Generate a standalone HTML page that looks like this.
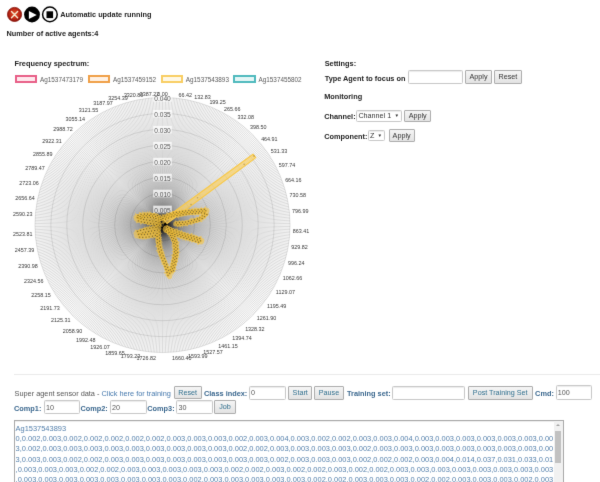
<!DOCTYPE html><html><head><meta charset="utf-8"><style>
*{margin:0;padding:0;box-sizing:border-box}
html,body{width:600px;height:482px;overflow:hidden;background:#fff}
body{position:relative;font-family:"Liberation Sans",sans-serif;color:#222}
.t{position:absolute;white-space:nowrap;line-height:1;font-size:7.35px}
.b{font-weight:bold}
.btn{position:absolute;border:1px solid #adadad;border-radius:1px;background:linear-gradient(#f5f5f5,#e3e3e3);font-size:7.2px;line-height:1;color:#333;display:flex;align-items:center;justify-content:center;white-space:nowrap}
.inp{position:absolute;border:1px solid #c8c8c8;border-radius:1.5px;box-shadow:inset 0 1px 1px rgba(0,0,0,.08);background:#fff;font-size:7.2px;line-height:1;color:#555;display:flex;align-items:center;padding-left:1px;white-space:nowrap}
.blue{color:#3a678e}
.lbox{position:absolute;height:8px;width:22.6px;border:2px solid}
</style></head><body><svg width="0" height="0" style="position:absolute"><filter id="sb" x="0" y="0" width="100%" height="100%" color-interpolation-filters="sRGB"><feConvolveMatrix order="3" kernelMatrix="1 10 1 10 100 10 1 10 1" divisor="144" edgeMode="duplicate"/></filter></svg><div style="position:absolute;left:0;top:0;width:600px;height:482px;background:#fff;filter:url(#sb)"><svg width="60" height="28" style="position:absolute;left:0;top:0">
<defs><radialGradient id="rg" cx="50%" cy="45%" r="55%"><stop offset="0" stop-color="#e05426"/><stop offset="0.6" stop-color="#c02a16"/><stop offset="1" stop-color="#8c1208"/></radialGradient></defs>
<circle cx="14.55" cy="14.45" r="7.05" fill="url(#rg)" stroke="#861008" stroke-width="0.8"/>
<path d="M11.5 11.6L17.6 17.7M17.6 11.6L11.5 17.7" stroke="#f6e8cf" stroke-width="1.45" stroke-linecap="round"/>
<circle cx="32" cy="14.5" r="7.9" fill="#000"/>
<path d="M28.9 11.1L36.7 15.1L28.9 19.1Z" fill="#fff"/>
<circle cx="49.9" cy="14.4" r="7.3" fill="none" stroke="#000" stroke-width="1.5"/>
<rect x="46.5" y="11.3" width="6.6" height="6.8" fill="#000"/>
</svg><div class="t b" style="left:60.2px;top:11.20px;">Automatic update running</div><div class="t b" style="left:6.4px;top:30.40px;">Number of active agents:4</div><div class="t b" style="left:14.5px;top:59.60px;">Frequency spectrum:</div><div class="lbox" style="left:14.8px;top:74.7px;border-color:rgb(232,96,136);background:rgba(255,99,132,0.15)"></div><div class="t" style="left:40.0px;top:76.90px;font-size:6.36px;color:#5a5a5a">Ag1537473179</div><div class="lbox" style="left:87.8px;top:74.7px;border-color:rgb(240,160,72);background:rgba(255,159,64,0.15)"></div><div class="t" style="left:113.0px;top:76.90px;font-size:6.36px;color:#5a5a5a">Ag1537459152</div><div class="lbox" style="left:160.6px;top:74.7px;border-color:rgb(248,206,100);background:rgba(255,205,86,0.15)"></div><div class="t" style="left:185.79999999999998px;top:76.90px;font-size:6.36px;color:#5a5a5a">Ag1537543893</div><div class="lbox" style="left:233.3px;top:74.7px;border-color:rgb(80,186,190);background:rgba(75,192,192,0.15)"></div><div class="t" style="left:258.5px;top:76.90px;font-size:6.36px;color:#5a5a5a">Ag1537455802</div><svg width="600" height="482" style="position:absolute;left:0;top:0" font-family="Liberation Sans, sans-serif"><g stroke="rgba(0,0,0,0.23)" stroke-width="0.6" fill="none"><path d="M162.5 225L162.5 97.4"/><path d="M162.5 225L164.07 97.41"/><path d="M162.5 225L165.63 97.44"/><path d="M162.5 225L167.2 97.49"/><path d="M162.5 225L168.76 97.55"/><path d="M162.5 225L170.32 97.64"/><path d="M162.5 225L171.89 97.75"/><path d="M162.5 225L173.45 97.87"/><path d="M162.5 225L175.01 98.01"/><path d="M162.5 225L176.56 98.18"/><path d="M162.5 225L178.12 98.36"/><path d="M162.5 225L179.67 98.56"/><path d="M162.5 225L181.22 98.78"/><path d="M162.5 225L182.77 99.02"/><path d="M162.5 225L184.31 99.28"/><path d="M162.5 225L185.86 99.56"/><path d="M162.5 225L187.39 99.85"/><path d="M162.5 225L188.93 100.17"/><path d="M162.5 225L190.46 100.5"/><path d="M162.5 225L191.98 100.85"/><path d="M162.5 225L193.5 101.22"/><path d="M162.5 225L195.02 101.61"/><path d="M162.5 225L196.53 102.02"/><path d="M162.5 225L198.04 102.45"/><path d="M162.5 225L199.54 102.89"/><path d="M162.5 225L201.04 103.36"/><path d="M162.5 225L202.53 103.84"/><path d="M162.5 225L204.01 104.34"/><path d="M162.5 225L205.49 104.86"/><path d="M162.5 225L206.96 105.4"/><path d="M162.5 225L208.42 105.95"/><path d="M162.5 225L209.88 106.52"/><path d="M162.5 225L211.33 107.11"/><path d="M162.5 225L212.77 107.72"/><path d="M162.5 225L214.21 108.35"/><path d="M162.5 225L215.64 108.99"/><path d="M162.5 225L217.06 109.65"/><path d="M162.5 225L218.47 110.33"/><path d="M162.5 225L219.87 111.02"/><path d="M162.5 225L221.26 111.74"/><path d="M162.5 225L222.65 112.47"/><path d="M162.5 225L224.03 113.21"/><path d="M162.5 225L225.39 113.98"/><path d="M162.5 225L226.75 114.76"/><path d="M162.5 225L228.1 115.55"/><path d="M162.5 225L229.44 116.37"/><path d="M162.5 225L230.77 117.2"/><path d="M162.5 225L232.08 118.04"/><path d="M162.5 225L233.39 118.9"/><path d="M162.5 225L234.69 119.78"/><path d="M162.5 225L235.97 120.68"/><path d="M162.5 225L237.25 121.59"/><path d="M162.5 225L238.51 122.51"/><path d="M162.5 225L239.76 123.45"/><path d="M162.5 225L241 124.41"/><path d="M162.5 225L242.23 125.38"/><path d="M162.5 225L243.45 126.36"/><path d="M162.5 225L244.65 127.36"/><path d="M162.5 225L245.84 128.38"/><path d="M162.5 225L247.02 129.41"/><path d="M162.5 225L248.19 130.45"/><path d="M162.5 225L249.34 131.51"/><path d="M162.5 225L250.49 132.59"/><path d="M162.5 225L251.61 133.67"/><path d="M162.5 225L252.73 134.77"/><path d="M162.5 225L253.83 135.89"/><path d="M162.5 225L254.91 137.01"/><path d="M162.5 225L255.99 138.16"/><path d="M162.5 225L257.05 139.31"/><path d="M162.5 225L258.09 140.48"/><path d="M162.5 225L259.12 141.66"/><path d="M162.5 225L260.14 142.85"/><path d="M162.5 225L261.14 144.05"/><path d="M162.5 225L262.12 145.27"/><path d="M162.5 225L263.09 146.5"/><path d="M162.5 225L264.05 147.74"/><path d="M162.5 225L264.99 148.99"/><path d="M162.5 225L265.91 150.25"/><path d="M162.5 225L266.82 151.53"/><path d="M162.5 225L267.72 152.81"/><path d="M162.5 225L268.6 154.11"/><path d="M162.5 225L269.46 155.42"/><path d="M162.5 225L270.3 156.73"/><path d="M162.5 225L271.13 158.06"/><path d="M162.5 225L271.95 159.4"/><path d="M162.5 225L272.74 160.75"/><path d="M162.5 225L273.52 162.11"/><path d="M162.5 225L274.29 163.47"/><path d="M162.5 225L275.03 164.85"/><path d="M162.5 225L275.76 166.24"/><path d="M162.5 225L276.48 167.63"/><path d="M162.5 225L277.17 169.03"/><path d="M162.5 225L277.85 170.44"/><path d="M162.5 225L278.51 171.86"/><path d="M162.5 225L279.15 173.29"/><path d="M162.5 225L279.78 174.73"/><path d="M162.5 225L280.39 176.17"/><path d="M162.5 225L280.98 177.62"/><path d="M162.5 225L281.55 179.08"/><path d="M162.5 225L282.1 180.54"/><path d="M162.5 225L282.64 182.01"/><path d="M162.5 225L283.16 183.49"/><path d="M162.5 225L283.66 184.97"/><path d="M162.5 225L284.14 186.46"/><path d="M162.5 225L284.61 187.96"/><path d="M162.5 225L285.05 189.46"/><path d="M162.5 225L285.48 190.97"/><path d="M162.5 225L285.89 192.48"/><path d="M162.5 225L286.28 194"/><path d="M162.5 225L286.65 195.52"/><path d="M162.5 225L287 197.04"/><path d="M162.5 225L287.33 198.57"/><path d="M162.5 225L287.65 200.11"/><path d="M162.5 225L287.94 201.64"/><path d="M162.5 225L288.22 203.19"/><path d="M162.5 225L288.48 204.73"/><path d="M162.5 225L288.72 206.28"/><path d="M162.5 225L288.94 207.83"/><path d="M162.5 225L289.14 209.38"/><path d="M162.5 225L289.32 210.94"/><path d="M162.5 225L289.49 212.49"/><path d="M162.5 225L289.63 214.05"/><path d="M162.5 225L289.75 215.61"/><path d="M162.5 225L289.86 217.18"/><path d="M162.5 225L289.95 218.74"/><path d="M162.5 225L290.01 220.3"/><path d="M162.5 225L290.06 221.87"/><path d="M162.5 225L290.09 223.43"/><path d="M162.5 225L290.1 225"/><path d="M162.5 225L290.09 226.57"/><path d="M162.5 225L290.06 228.13"/><path d="M162.5 225L290.01 229.7"/><path d="M162.5 225L289.95 231.26"/><path d="M162.5 225L289.86 232.82"/><path d="M162.5 225L289.75 234.39"/><path d="M162.5 225L289.63 235.95"/><path d="M162.5 225L289.49 237.51"/><path d="M162.5 225L289.32 239.06"/><path d="M162.5 225L289.14 240.62"/><path d="M162.5 225L288.94 242.17"/><path d="M162.5 225L288.72 243.72"/><path d="M162.5 225L288.48 245.27"/><path d="M162.5 225L288.22 246.81"/><path d="M162.5 225L287.94 248.36"/><path d="M162.5 225L287.65 249.89"/><path d="M162.5 225L287.33 251.43"/><path d="M162.5 225L287 252.96"/><path d="M162.5 225L286.65 254.48"/><path d="M162.5 225L286.28 256"/><path d="M162.5 225L285.89 257.52"/><path d="M162.5 225L285.48 259.03"/><path d="M162.5 225L285.05 260.54"/><path d="M162.5 225L284.61 262.04"/><path d="M162.5 225L284.14 263.54"/><path d="M162.5 225L283.66 265.03"/><path d="M162.5 225L283.16 266.51"/><path d="M162.5 225L282.64 267.99"/><path d="M162.5 225L282.1 269.46"/><path d="M162.5 225L281.55 270.92"/><path d="M162.5 225L280.98 272.38"/><path d="M162.5 225L280.39 273.83"/><path d="M162.5 225L279.78 275.27"/><path d="M162.5 225L279.15 276.71"/><path d="M162.5 225L278.51 278.14"/><path d="M162.5 225L277.85 279.56"/><path d="M162.5 225L277.17 280.97"/><path d="M162.5 225L276.48 282.37"/><path d="M162.5 225L275.76 283.76"/><path d="M162.5 225L275.03 285.15"/><path d="M162.5 225L274.29 286.53"/><path d="M162.5 225L273.52 287.89"/><path d="M162.5 225L272.74 289.25"/><path d="M162.5 225L271.95 290.6"/><path d="M162.5 225L271.13 291.94"/><path d="M162.5 225L270.3 293.27"/><path d="M162.5 225L269.46 294.58"/><path d="M162.5 225L268.6 295.89"/><path d="M162.5 225L267.72 297.19"/><path d="M162.5 225L266.82 298.47"/><path d="M162.5 225L265.91 299.75"/><path d="M162.5 225L264.99 301.01"/><path d="M162.5 225L264.05 302.26"/><path d="M162.5 225L263.09 303.5"/><path d="M162.5 225L262.12 304.73"/><path d="M162.5 225L261.14 305.95"/><path d="M162.5 225L260.14 307.15"/><path d="M162.5 225L259.12 308.34"/><path d="M162.5 225L258.09 309.52"/><path d="M162.5 225L257.05 310.69"/><path d="M162.5 225L255.99 311.84"/><path d="M162.5 225L254.91 312.99"/><path d="M162.5 225L253.83 314.11"/><path d="M162.5 225L252.73 315.23"/><path d="M162.5 225L251.61 316.33"/><path d="M162.5 225L250.49 317.41"/><path d="M162.5 225L249.34 318.49"/><path d="M162.5 225L248.19 319.55"/><path d="M162.5 225L247.02 320.59"/><path d="M162.5 225L245.84 321.62"/><path d="M162.5 225L244.65 322.64"/><path d="M162.5 225L243.45 323.64"/><path d="M162.5 225L242.23 324.62"/><path d="M162.5 225L241 325.59"/><path d="M162.5 225L239.76 326.55"/><path d="M162.5 225L238.51 327.49"/><path d="M162.5 225L237.25 328.41"/><path d="M162.5 225L235.97 329.32"/><path d="M162.5 225L234.69 330.22"/><path d="M162.5 225L233.39 331.1"/><path d="M162.5 225L232.08 331.96"/><path d="M162.5 225L230.77 332.8"/><path d="M162.5 225L229.44 333.63"/><path d="M162.5 225L228.1 334.45"/><path d="M162.5 225L226.75 335.24"/><path d="M162.5 225L225.39 336.02"/><path d="M162.5 225L224.03 336.79"/><path d="M162.5 225L222.65 337.53"/><path d="M162.5 225L221.26 338.26"/><path d="M162.5 225L219.87 338.98"/><path d="M162.5 225L218.47 339.67"/><path d="M162.5 225L217.06 340.35"/><path d="M162.5 225L215.64 341.01"/><path d="M162.5 225L214.21 341.65"/><path d="M162.5 225L212.77 342.28"/><path d="M162.5 225L211.33 342.89"/><path d="M162.5 225L209.88 343.48"/><path d="M162.5 225L208.42 344.05"/><path d="M162.5 225L206.96 344.6"/><path d="M162.5 225L205.49 345.14"/><path d="M162.5 225L204.01 345.66"/><path d="M162.5 225L202.53 346.16"/><path d="M162.5 225L201.04 346.64"/><path d="M162.5 225L199.54 347.11"/><path d="M162.5 225L198.04 347.55"/><path d="M162.5 225L196.53 347.98"/><path d="M162.5 225L195.02 348.39"/><path d="M162.5 225L193.5 348.78"/><path d="M162.5 225L191.98 349.15"/><path d="M162.5 225L190.46 349.5"/><path d="M162.5 225L188.93 349.83"/><path d="M162.5 225L187.39 350.15"/><path d="M162.5 225L185.86 350.44"/><path d="M162.5 225L184.31 350.72"/><path d="M162.5 225L182.77 350.98"/><path d="M162.5 225L181.22 351.22"/><path d="M162.5 225L179.67 351.44"/><path d="M162.5 225L178.12 351.64"/><path d="M162.5 225L176.56 351.82"/><path d="M162.5 225L175.01 351.99"/><path d="M162.5 225L173.45 352.13"/><path d="M162.5 225L171.89 352.25"/><path d="M162.5 225L170.32 352.36"/><path d="M162.5 225L168.76 352.45"/><path d="M162.5 225L167.2 352.51"/><path d="M162.5 225L165.63 352.56"/><path d="M162.5 225L164.07 352.59"/><path d="M162.5 225L162.5 352.6"/><path d="M162.5 225L160.93 352.59"/><path d="M162.5 225L159.37 352.56"/><path d="M162.5 225L157.8 352.51"/><path d="M162.5 225L156.24 352.45"/><path d="M162.5 225L154.68 352.36"/><path d="M162.5 225L153.11 352.25"/><path d="M162.5 225L151.55 352.13"/><path d="M162.5 225L149.99 351.99"/><path d="M162.5 225L148.44 351.82"/><path d="M162.5 225L146.88 351.64"/><path d="M162.5 225L145.33 351.44"/><path d="M162.5 225L143.78 351.22"/><path d="M162.5 225L142.23 350.98"/><path d="M162.5 225L140.69 350.72"/><path d="M162.5 225L139.14 350.44"/><path d="M162.5 225L137.61 350.15"/><path d="M162.5 225L136.07 349.83"/><path d="M162.5 225L134.54 349.5"/><path d="M162.5 225L133.02 349.15"/><path d="M162.5 225L131.5 348.78"/><path d="M162.5 225L129.98 348.39"/><path d="M162.5 225L128.47 347.98"/><path d="M162.5 225L126.96 347.55"/><path d="M162.5 225L125.46 347.11"/><path d="M162.5 225L123.96 346.64"/><path d="M162.5 225L122.47 346.16"/><path d="M162.5 225L120.99 345.66"/><path d="M162.5 225L119.51 345.14"/><path d="M162.5 225L118.04 344.6"/><path d="M162.5 225L116.58 344.05"/><path d="M162.5 225L115.12 343.48"/><path d="M162.5 225L113.67 342.89"/><path d="M162.5 225L112.23 342.28"/><path d="M162.5 225L110.79 341.65"/><path d="M162.5 225L109.36 341.01"/><path d="M162.5 225L107.94 340.35"/><path d="M162.5 225L106.53 339.67"/><path d="M162.5 225L105.13 338.98"/><path d="M162.5 225L103.74 338.26"/><path d="M162.5 225L102.35 337.53"/><path d="M162.5 225L100.97 336.79"/><path d="M162.5 225L99.61 336.02"/><path d="M162.5 225L98.25 335.24"/><path d="M162.5 225L96.9 334.45"/><path d="M162.5 225L95.56 333.63"/><path d="M162.5 225L94.23 332.8"/><path d="M162.5 225L92.92 331.96"/><path d="M162.5 225L91.61 331.1"/><path d="M162.5 225L90.31 330.22"/><path d="M162.5 225L89.03 329.32"/><path d="M162.5 225L87.75 328.41"/><path d="M162.5 225L86.49 327.49"/><path d="M162.5 225L85.24 326.55"/><path d="M162.5 225L84 325.59"/><path d="M162.5 225L82.77 324.62"/><path d="M162.5 225L81.55 323.64"/><path d="M162.5 225L80.35 322.64"/><path d="M162.5 225L79.16 321.62"/><path d="M162.5 225L77.98 320.59"/><path d="M162.5 225L76.81 319.55"/><path d="M162.5 225L75.66 318.49"/><path d="M162.5 225L74.51 317.41"/><path d="M162.5 225L73.39 316.33"/><path d="M162.5 225L72.27 315.23"/><path d="M162.5 225L71.17 314.11"/><path d="M162.5 225L70.09 312.99"/><path d="M162.5 225L69.01 311.84"/><path d="M162.5 225L67.95 310.69"/><path d="M162.5 225L66.91 309.52"/><path d="M162.5 225L65.88 308.34"/><path d="M162.5 225L64.86 307.15"/><path d="M162.5 225L63.86 305.95"/><path d="M162.5 225L62.88 304.73"/><path d="M162.5 225L61.91 303.5"/><path d="M162.5 225L60.95 302.26"/><path d="M162.5 225L60.01 301.01"/><path d="M162.5 225L59.09 299.75"/><path d="M162.5 225L58.18 298.47"/><path d="M162.5 225L57.28 297.19"/><path d="M162.5 225L56.4 295.89"/><path d="M162.5 225L55.54 294.58"/><path d="M162.5 225L54.7 293.27"/><path d="M162.5 225L53.87 291.94"/><path d="M162.5 225L53.05 290.6"/><path d="M162.5 225L52.26 289.25"/><path d="M162.5 225L51.48 287.89"/><path d="M162.5 225L50.71 286.53"/><path d="M162.5 225L49.97 285.15"/><path d="M162.5 225L49.24 283.76"/><path d="M162.5 225L48.52 282.37"/><path d="M162.5 225L47.83 280.97"/><path d="M162.5 225L47.15 279.56"/><path d="M162.5 225L46.49 278.14"/><path d="M162.5 225L45.85 276.71"/><path d="M162.5 225L45.22 275.27"/><path d="M162.5 225L44.61 273.83"/><path d="M162.5 225L44.02 272.38"/><path d="M162.5 225L43.45 270.92"/><path d="M162.5 225L42.9 269.46"/><path d="M162.5 225L42.36 267.99"/><path d="M162.5 225L41.84 266.51"/><path d="M162.5 225L41.34 265.03"/><path d="M162.5 225L40.86 263.54"/><path d="M162.5 225L40.39 262.04"/><path d="M162.5 225L39.95 260.54"/><path d="M162.5 225L39.52 259.03"/><path d="M162.5 225L39.11 257.52"/><path d="M162.5 225L38.72 256"/><path d="M162.5 225L38.35 254.48"/><path d="M162.5 225L38 252.96"/><path d="M162.5 225L37.67 251.43"/><path d="M162.5 225L37.35 249.89"/><path d="M162.5 225L37.06 248.36"/><path d="M162.5 225L36.78 246.81"/><path d="M162.5 225L36.52 245.27"/><path d="M162.5 225L36.28 243.72"/><path d="M162.5 225L36.06 242.17"/><path d="M162.5 225L35.86 240.62"/><path d="M162.5 225L35.68 239.06"/><path d="M162.5 225L35.51 237.51"/><path d="M162.5 225L35.37 235.95"/><path d="M162.5 225L35.25 234.39"/><path d="M162.5 225L35.14 232.82"/><path d="M162.5 225L35.05 231.26"/><path d="M162.5 225L34.99 229.7"/><path d="M162.5 225L34.94 228.13"/><path d="M162.5 225L34.91 226.57"/><path d="M162.5 225L34.9 225"/><path d="M162.5 225L34.91 223.43"/><path d="M162.5 225L34.94 221.87"/><path d="M162.5 225L34.99 220.3"/><path d="M162.5 225L35.05 218.74"/><path d="M162.5 225L35.14 217.18"/><path d="M162.5 225L35.25 215.61"/><path d="M162.5 225L35.37 214.05"/><path d="M162.5 225L35.51 212.49"/><path d="M162.5 225L35.68 210.94"/><path d="M162.5 225L35.86 209.38"/><path d="M162.5 225L36.06 207.83"/><path d="M162.5 225L36.28 206.28"/><path d="M162.5 225L36.52 204.73"/><path d="M162.5 225L36.78 203.19"/><path d="M162.5 225L37.06 201.64"/><path d="M162.5 225L37.35 200.11"/><path d="M162.5 225L37.67 198.57"/><path d="M162.5 225L38 197.04"/><path d="M162.5 225L38.35 195.52"/><path d="M162.5 225L38.72 194"/><path d="M162.5 225L39.11 192.48"/><path d="M162.5 225L39.52 190.97"/><path d="M162.5 225L39.95 189.46"/><path d="M162.5 225L40.39 187.96"/><path d="M162.5 225L40.86 186.46"/><path d="M162.5 225L41.34 184.97"/><path d="M162.5 225L41.84 183.49"/><path d="M162.5 225L42.36 182.01"/><path d="M162.5 225L42.9 180.54"/><path d="M162.5 225L43.45 179.08"/><path d="M162.5 225L44.02 177.62"/><path d="M162.5 225L44.61 176.17"/><path d="M162.5 225L45.22 174.73"/><path d="M162.5 225L45.85 173.29"/><path d="M162.5 225L46.49 171.86"/><path d="M162.5 225L47.15 170.44"/><path d="M162.5 225L47.83 169.03"/><path d="M162.5 225L48.52 167.63"/><path d="M162.5 225L49.24 166.24"/><path d="M162.5 225L49.97 164.85"/><path d="M162.5 225L50.71 163.47"/><path d="M162.5 225L51.48 162.11"/><path d="M162.5 225L52.26 160.75"/><path d="M162.5 225L53.05 159.4"/><path d="M162.5 225L53.87 158.06"/><path d="M162.5 225L54.7 156.73"/><path d="M162.5 225L55.54 155.42"/><path d="M162.5 225L56.4 154.11"/><path d="M162.5 225L57.28 152.81"/><path d="M162.5 225L58.18 151.53"/><path d="M162.5 225L59.09 150.25"/><path d="M162.5 225L60.01 148.99"/><path d="M162.5 225L60.95 147.74"/><path d="M162.5 225L61.91 146.5"/><path d="M162.5 225L62.88 145.27"/><path d="M162.5 225L63.86 144.05"/><path d="M162.5 225L64.86 142.85"/><path d="M162.5 225L65.88 141.66"/><path d="M162.5 225L66.91 140.48"/><path d="M162.5 225L67.95 139.31"/><path d="M162.5 225L69.01 138.16"/><path d="M162.5 225L70.09 137.01"/><path d="M162.5 225L71.17 135.89"/><path d="M162.5 225L72.27 134.77"/><path d="M162.5 225L73.39 133.67"/><path d="M162.5 225L74.51 132.59"/><path d="M162.5 225L75.66 131.51"/><path d="M162.5 225L76.81 130.45"/><path d="M162.5 225L77.98 129.41"/><path d="M162.5 225L79.16 128.38"/><path d="M162.5 225L80.35 127.36"/><path d="M162.5 225L81.55 126.36"/><path d="M162.5 225L82.77 125.38"/><path d="M162.5 225L84 124.41"/><path d="M162.5 225L85.24 123.45"/><path d="M162.5 225L86.49 122.51"/><path d="M162.5 225L87.75 121.59"/><path d="M162.5 225L89.03 120.68"/><path d="M162.5 225L90.31 119.78"/><path d="M162.5 225L91.61 118.9"/><path d="M162.5 225L92.92 118.04"/><path d="M162.5 225L94.23 117.2"/><path d="M162.5 225L95.56 116.37"/><path d="M162.5 225L96.9 115.55"/><path d="M162.5 225L98.25 114.76"/><path d="M162.5 225L99.61 113.98"/><path d="M162.5 225L100.97 113.21"/><path d="M162.5 225L102.35 112.47"/><path d="M162.5 225L103.74 111.74"/><path d="M162.5 225L105.13 111.02"/><path d="M162.5 225L106.53 110.33"/><path d="M162.5 225L107.94 109.65"/><path d="M162.5 225L109.36 108.99"/><path d="M162.5 225L110.79 108.35"/><path d="M162.5 225L112.23 107.72"/><path d="M162.5 225L113.67 107.11"/><path d="M162.5 225L115.12 106.52"/><path d="M162.5 225L116.58 105.95"/><path d="M162.5 225L118.04 105.4"/><path d="M162.5 225L119.51 104.86"/><path d="M162.5 225L120.99 104.34"/><path d="M162.5 225L122.47 103.84"/><path d="M162.5 225L123.96 103.36"/><path d="M162.5 225L125.46 102.89"/><path d="M162.5 225L126.96 102.45"/><path d="M162.5 225L128.47 102.02"/><path d="M162.5 225L129.98 101.61"/><path d="M162.5 225L131.5 101.22"/><path d="M162.5 225L133.02 100.85"/><path d="M162.5 225L134.54 100.5"/><path d="M162.5 225L136.07 100.17"/><path d="M162.5 225L137.61 99.85"/><path d="M162.5 225L139.14 99.56"/><path d="M162.5 225L140.69 99.28"/><path d="M162.5 225L142.23 99.02"/><path d="M162.5 225L143.78 98.78"/><path d="M162.5 225L145.33 98.56"/><path d="M162.5 225L146.88 98.36"/><path d="M162.5 225L148.44 98.18"/><path d="M162.5 225L149.99 98.01"/><path d="M162.5 225L151.55 97.87"/><path d="M162.5 225L153.11 97.75"/><path d="M162.5 225L154.68 97.64"/><path d="M162.5 225L156.24 97.55"/><path d="M162.5 225L157.8 97.49"/><path d="M162.5 225L159.37 97.44"/><path d="M162.5 225L160.93 97.41"/></g><circle cx="162.5" cy="225.0" r="15.95" stroke="rgba(0,0,0,0.11)" stroke-width="0.9" fill="none"/><circle cx="162.5" cy="225.0" r="31.9" stroke="rgba(0,0,0,0.11)" stroke-width="0.9" fill="none"/><circle cx="162.5" cy="225.0" r="47.85" stroke="rgba(0,0,0,0.11)" stroke-width="0.9" fill="none"/><circle cx="162.5" cy="225.0" r="63.8" stroke="rgba(0,0,0,0.11)" stroke-width="0.9" fill="none"/><circle cx="162.5" cy="225.0" r="79.75" stroke="rgba(0,0,0,0.11)" stroke-width="0.9" fill="none"/><circle cx="162.5" cy="225.0" r="95.7" stroke="rgba(0,0,0,0.11)" stroke-width="0.9" fill="none"/><circle cx="162.5" cy="225.0" r="111.65" stroke="rgba(0,0,0,0.11)" stroke-width="0.9" fill="none"/><circle cx="162.5" cy="225.0" r="127.6" stroke="rgba(0,0,0,0.11)" stroke-width="0.9" fill="none"/><rect x="153.2" y="205.65" width="18.6" height="7.6" fill="rgba(255,255,255,0.75)"/><text x="162.5" y="212.55" text-anchor="middle" font-size="6.6" fill="#555">0.005</text><rect x="153.2" y="189.7" width="18.6" height="7.6" fill="rgba(255,255,255,0.75)"/><text x="162.5" y="196.6" text-anchor="middle" font-size="6.6" fill="#555">0.010</text><rect x="153.2" y="173.75" width="18.6" height="7.6" fill="rgba(255,255,255,0.75)"/><text x="162.5" y="180.65" text-anchor="middle" font-size="6.6" fill="#555">0.015</text><rect x="153.2" y="157.8" width="18.6" height="7.6" fill="rgba(255,255,255,0.75)"/><text x="162.5" y="164.7" text-anchor="middle" font-size="6.6" fill="#555">0.020</text><rect x="153.2" y="141.85" width="18.6" height="7.6" fill="rgba(255,255,255,0.75)"/><text x="162.5" y="148.75" text-anchor="middle" font-size="6.6" fill="#555">0.025</text><rect x="153.2" y="125.9" width="18.6" height="7.6" fill="rgba(255,255,255,0.75)"/><text x="162.5" y="132.8" text-anchor="middle" font-size="6.6" fill="#555">0.030</text><rect x="153.2" y="109.95" width="18.6" height="7.6" fill="rgba(255,255,255,0.75)"/><text x="162.5" y="116.85" text-anchor="middle" font-size="6.6" fill="#555">0.035</text><rect x="153.2" y="94" width="18.6" height="7.6" fill="rgba(255,255,255,0.75)"/><text x="162.5" y="100.9" text-anchor="middle" font-size="6.6" fill="#555">0.040</text><text x="162.5" y="95.55" text-anchor="middle" font-size="5.4" fill="#383838">0.00</text><text x="178.44" y="96.53" text-anchor="start" font-size="5.4" fill="#383838">66.42</text><text x="194.15" y="99.45" text-anchor="start" font-size="5.4" fill="#383838">132.83</text><text x="209.38" y="104.28" text-anchor="start" font-size="5.4" fill="#383838">199.25</text><text x="223.9" y="110.93" text-anchor="start" font-size="5.4" fill="#383838">265.66</text><text x="237.5" y="119.31" text-anchor="start" font-size="5.4" fill="#383838">332.08</text><text x="249.97" y="129.29" text-anchor="start" font-size="5.4" fill="#383838">398.50</text><text x="261.13" y="140.72" text-anchor="start" font-size="5.4" fill="#383838">464.91</text><text x="270.8" y="153.44" text-anchor="start" font-size="5.4" fill="#383838">531.33</text><text x="278.84" y="167.24" text-anchor="start" font-size="5.4" fill="#383838">597.74</text><text x="285.14" y="181.92" text-anchor="start" font-size="5.4" fill="#383838">664.16</text><text x="289.59" y="197.26" text-anchor="start" font-size="5.4" fill="#383838">730.58</text><text x="292.12" y="213.03" text-anchor="start" font-size="5.4" fill="#383838">796.99</text><text x="292.71" y="233.2" text-anchor="start" font-size="5.4" fill="#383838">863.41</text><text x="291.34" y="249.11" text-anchor="start" font-size="5.4" fill="#383838">929.82</text><text x="288.03" y="264.74" text-anchor="start" font-size="5.4" fill="#383838">996.24</text><text x="282.84" y="279.84" text-anchor="start" font-size="5.4" fill="#383838">1062.66</text><text x="275.83" y="294.2" text-anchor="start" font-size="5.4" fill="#383838">1129.07</text><text x="267.12" y="307.59" text-anchor="start" font-size="5.4" fill="#383838">1195.49</text><text x="256.83" y="319.81" text-anchor="start" font-size="5.4" fill="#383838">1261.90</text><text x="245.13" y="330.68" text-anchor="start" font-size="5.4" fill="#383838">1328.32</text><text x="232.18" y="340.04" text-anchor="start" font-size="5.4" fill="#383838">1394.74</text><text x="218.19" y="347.74" text-anchor="start" font-size="5.4" fill="#383838">1461.15</text><text x="203.36" y="353.68" text-anchor="start" font-size="5.4" fill="#383838">1527.57</text><text x="187.91" y="357.75" text-anchor="start" font-size="5.4" fill="#383838">1593.99</text><text x="172.08" y="359.9" text-anchor="start" font-size="5.4" fill="#383838">1660.40</text><text x="156.11" y="360.09" text-anchor="end" font-size="5.4" fill="#383838">1726.82</text><text x="140.23" y="358.33" text-anchor="end" font-size="5.4" fill="#383838">1793.23</text><text x="124.69" y="354.64" text-anchor="end" font-size="5.4" fill="#383838">1859.65</text><text x="109.72" y="349.08" text-anchor="end" font-size="5.4" fill="#383838">1926.07</text><text x="95.54" y="341.72" text-anchor="end" font-size="5.4" fill="#383838">1992.48</text><text x="82.37" y="332.68" text-anchor="end" font-size="5.4" fill="#383838">2058.90</text><text x="70.4" y="322.1" text-anchor="end" font-size="5.4" fill="#383838">2125.31</text><text x="59.82" y="310.13" text-anchor="end" font-size="5.4" fill="#383838">2191.73</text><text x="50.78" y="296.96" text-anchor="end" font-size="5.4" fill="#383838">2258.15</text><text x="43.42" y="282.78" text-anchor="end" font-size="5.4" fill="#383838">2324.56</text><text x="37.86" y="267.81" text-anchor="end" font-size="5.4" fill="#383838">2390.98</text><text x="34.17" y="252.27" text-anchor="end" font-size="5.4" fill="#383838">2457.39</text><text x="32.41" y="236.39" text-anchor="end" font-size="5.4" fill="#383838">2523.81</text><text x="32.6" y="216.22" text-anchor="end" font-size="5.4" fill="#383838">2590.23</text><text x="34.75" y="200.39" text-anchor="end" font-size="5.4" fill="#383838">2656.64</text><text x="38.82" y="184.94" text-anchor="end" font-size="5.4" fill="#383838">2723.06</text><text x="44.76" y="170.11" text-anchor="end" font-size="5.4" fill="#383838">2789.47</text><text x="52.46" y="156.12" text-anchor="end" font-size="5.4" fill="#383838">2855.89</text><text x="61.82" y="143.17" text-anchor="end" font-size="5.4" fill="#383838">2922.31</text><text x="72.69" y="131.47" text-anchor="end" font-size="5.4" fill="#383838">2988.72</text><text x="84.91" y="121.18" text-anchor="end" font-size="5.4" fill="#383838">3055.14</text><text x="98.3" y="112.47" text-anchor="end" font-size="5.4" fill="#383838">3121.55</text><text x="112.66" y="105.46" text-anchor="end" font-size="5.4" fill="#383838">3187.97</text><text x="127.76" y="100.27" text-anchor="end" font-size="5.4" fill="#383838">3254.39</text><text x="143.39" y="96.96" text-anchor="end" font-size="5.4" fill="#383838">3320.80</text><text x="159.3" y="95.59" text-anchor="end" font-size="5.4" fill="#383838">3387.22</text><path d="M163.5 219.5L253 154.2L255.8 157.6L167 223.5Z" fill="rgba(250,208,100,0.7)" stroke="rgb(248,200,72)" stroke-width="1.1" stroke-linejoin="round"/><g fill="rgba(120,90,20,0.35)"><circle cx="244.2" cy="164.3" r="0.9"/><circle cx="254" cy="156" r="0.9"/><circle cx="197.5" cy="197.8" r="0.8"/><circle cx="191" cy="204.6" r="0.8"/></g><g opacity="0.62"><g stroke="rgb(248,200,72)" stroke-linecap="round" stroke-linejoin="round" fill="none"><path d="M163 220.5L156 216.6L150 215.6L143 215.8L136.5 217.5" stroke-width="6.0"/><path d="M161 224L155 222.8L148 221.6L142 220.6L137 219" stroke-width="5.6"/><path d="M158.5 228.4L150 229.8L143 231.2L136.5 233.4" stroke-width="5.8"/><path d="M156 233.8L150 235.4L143.5 236L137 235.6" stroke-width="5.6"/><path d="M158 231L158.6 243.7L161 253.6L165 263L168 271.8L169.6 276.6" stroke-width="5.0"/><path d="M167 229L172.5 235L175.5 243.5L176 252L174.2 262L171.5 271.5" stroke-width="6.0"/><path d="M164 218L173 214.6L188 212.3L206.5 210.8" stroke-width="6.0"/><path d="M175.5 224L186.6 223L199.7 219.3L206 214" stroke-width="4.8"/><path d="M166 229L180 234.5L191 237.8L201 241" stroke-width="6.6"/></g><g fill="rgb(248,200,72)"><circle cx="161.63" cy="222.95" r="0.87"/><circle cx="159.91" cy="221.53" r="1.15"/><circle cx="156.19" cy="219.16" r="1.09"/><circle cx="155.48" cy="219.7" r="0.9"/><circle cx="145.66" cy="217.91" r="1.08"/><circle cx="145.51" cy="212.59" r="0.88"/><circle cx="142.44" cy="213.67" r="0.97"/><circle cx="140.02" cy="213.12" r="1.1"/><circle cx="135.85" cy="214.53" r="0.81"/><circle cx="161.53" cy="221.35" r="0.98"/><circle cx="159.23" cy="221.63" r="1"/><circle cx="156.2" cy="225.58" r="0.97"/><circle cx="157.21" cy="220.51" r="0.84"/><circle cx="155.37" cy="220.64" r="1.06"/><circle cx="150.2" cy="224.76" r="1.1"/><circle cx="148.11" cy="223.91" r="1.06"/><circle cx="148.4" cy="219.2" r="1.11"/><circle cx="146.35" cy="218.15" r="1.12"/><circle cx="144.05" cy="218.57" r="0.8"/><circle cx="140.78" cy="217.2" r="0.78"/><circle cx="136.86" cy="222.23" r="0.98"/><circle cx="158.87" cy="230.63" r="0.94"/><circle cx="158.01" cy="225.41" r="1.11"/><circle cx="155.95" cy="226.44" r="0.82"/><circle cx="154.58" cy="231.7" r="1.05"/><circle cx="153.82" cy="227.05" r="1.14"/><circle cx="152.42" cy="232.09" r="0.84"/><circle cx="150.53" cy="232.47" r="1.02"/><circle cx="149.45" cy="227.07" r="1.05"/><circle cx="148.33" cy="232.67" r="0.92"/><circle cx="147.27" cy="227.39" r="0.91"/><circle cx="146.19" cy="233.17" r="0.89"/><circle cx="144.04" cy="233.65" r="0.76"/><circle cx="141.8" cy="234.52" r="0.7"/><circle cx="140.23" cy="229.89" r="1.1"/><circle cx="139.83" cy="235.54" r="1"/><circle cx="156.6" cy="236.04" r="0.95"/><circle cx="155.45" cy="231.74" r="0.81"/><circle cx="153.24" cy="232.01" r="0.74"/><circle cx="145.88" cy="238.63" r="0.78"/><circle cx="145.42" cy="233.61" r="1.01"/><circle cx="143.33" cy="238.81" r="0.89"/><circle cx="141.48" cy="232.96" r="0.76"/><circle cx="160.82" cy="237.47" r="1.09"/><circle cx="155.59" cy="237.72" r="0.84"/><circle cx="161.1" cy="239.66" r="0.83"/><circle cx="156.38" cy="239.89" r="0.9"/><circle cx="156.06" cy="242.1" r="0.75"/><circle cx="161.53" cy="245.25" r="0.99"/><circle cx="156.61" cy="246.45" r="1.13"/><circle cx="157.48" cy="250.76" r="0.99"/><circle cx="163.14" cy="251.65" r="0.97"/><circle cx="163.33" cy="252.61" r="1.04"/><circle cx="160.24" cy="258.71" r="0.75"/><circle cx="161.89" cy="260.4" r="0.89"/><circle cx="163.18" cy="263.62" r="1.05"/><circle cx="169.59" cy="268.41" r="1"/><circle cx="164.96" cy="269.99" r="0.72"/><circle cx="169.96" cy="271.15" r="0.81"/><circle cx="165.41" cy="272.66" r="1.01"/><circle cx="167.82" cy="276.5" r="0.74"/><circle cx="164.83" cy="230.99" r="0.84"/><circle cx="170.9" cy="228.41" r="1.02"/><circle cx="168.26" cy="233.81" r="0.88"/><circle cx="173.48" cy="232.02" r="0.73"/><circle cx="175.66" cy="233.88" r="0.8"/><circle cx="171.87" cy="239.89" r="1.01"/><circle cx="172.67" cy="241.94" r="0.72"/><circle cx="178.23" cy="245.54" r="0.85"/><circle cx="172.68" cy="255.87" r="0.73"/><circle cx="172.7" cy="258.11" r="0.77"/><circle cx="171.65" cy="260.16" r="0.89"/><circle cx="170.46" cy="263.22" r="0.74"/><circle cx="175.17" cy="269.14" r="0.9"/><circle cx="169.08" cy="269.69" r="1.03"/><circle cx="163.1" cy="215.61" r="1.15"/><circle cx="164.82" cy="220.17" r="1.12"/><circle cx="171.35" cy="218.77" r="0.78"/><circle cx="173.32" cy="217.76" r="0.82"/><circle cx="173.33" cy="216.78" r="0.77"/><circle cx="177" cy="211.65" r="0.84"/><circle cx="177.84" cy="217.1" r="0.83"/><circle cx="179.16" cy="211.21" r="1.06"/><circle cx="183.49" cy="210.42" r="0.72"/><circle cx="184.25" cy="215.41" r="0.81"/><circle cx="185.68" cy="210.19" r="0.72"/><circle cx="187.82" cy="210.03" r="1.04"/><circle cx="194.35" cy="209" r="0.78"/><circle cx="197" cy="214.36" r="0.89"/><circle cx="201.4" cy="214.19" r="0.87"/><circle cx="205.29" cy="207.71" r="0.84"/><circle cx="205.75" cy="213.48" r="0.83"/><circle cx="175.34" cy="222.21" r="0.79"/><circle cx="177.86" cy="225.64" r="0.92"/><circle cx="179.64" cy="220.87" r="0.76"/><circle cx="180.13" cy="226.38" r="1"/><circle cx="181.93" cy="221.84" r="1.04"/><circle cx="184.12" cy="221.58" r="0.88"/><circle cx="184.41" cy="224.87" r="0.77"/><circle cx="186.3" cy="221.27" r="1.12"/><circle cx="187.02" cy="224.47" r="0.86"/><circle cx="190.24" cy="219.69" r="1.07"/><circle cx="192.45" cy="219.43" r="0.79"/><circle cx="197.81" cy="222.2" r="0.85"/><circle cx="198.78" cy="217.57" r="0.86"/><circle cx="201.48" cy="221.42" r="0.82"/><circle cx="199.88" cy="216.09" r="0.83"/><circle cx="204.55" cy="218.23" r="0.73"/><circle cx="203.07" cy="213.05" r="0.87"/><circle cx="205.9" cy="216.41" r="0.95"/><circle cx="167.29" cy="225.72" r="1.02"/><circle cx="164.95" cy="231.68" r="0.99"/><circle cx="170.99" cy="228.34" r="0.94"/><circle cx="173.22" cy="234.68" r="1.07"/><circle cx="177.13" cy="230.75" r="0.86"/><circle cx="175.18" cy="235.73" r="0.93"/><circle cx="179.21" cy="231.48" r="1.14"/><circle cx="177.2" cy="236.59" r="1.04"/><circle cx="180.69" cy="232.19" r="0.92"/><circle cx="179.15" cy="237.32" r="0.96"/><circle cx="182.94" cy="232.35" r="0.74"/><circle cx="181.07" cy="238.6" r="0.94"/><circle cx="184.99" cy="233.18" r="0.91"/><circle cx="185.43" cy="239.36" r="0.98"/><circle cx="187.72" cy="239.4" r="0.89"/><circle cx="191.53" cy="234.34" r="1.12"/><circle cx="189.78" cy="240.19" r="0.72"/><circle cx="190.17" cy="240.4" r="0.82"/><circle cx="193.87" cy="236.05" r="0.8"/><circle cx="196.22" cy="235.93" r="0.88"/><circle cx="198.04" cy="237.46" r="1.05"/><circle cx="200.47" cy="237.08" r="1.01"/><circle cx="198.26" cy="244" r="0.92"/><path d="M165.14 218.72L163.39 217.74L164.39 216.9Z"/><path d="M160.69 222.19L158.94 221.21L158.69 223.79Z"/><path d="M163.22 217.64L161.47 216.67L162.85 215.05Z"/><path d="M161.3 216.57L159.55 215.6L161.4 214.04Z"/><path d="M156.84 220.05L155.1 219.07L154.37 221.19Z"/><path d="M157.41 214.2L155.44 213.87L157.1 212.74Z"/><path d="M154.39 218.97L152.42 218.64L153.38 220.9Z"/><path d="M155.24 213.84L153.27 213.51L154.4 211.98Z"/><path d="M150.93 212.97L148.93 213.03L149.11 210.62Z"/><path d="M148.73 213.04L146.73 213.09L147.54 210.7Z"/><path d="M146.53 213.1L144.53 213.16L145.05 211.53Z"/><path d="M144.48 218.36L142.48 218.42L144.26 220.43Z"/><path d="M144.33 213.16L142.33 213.22L142.49 210.78Z"/><path d="M143.31 213.03L141.37 213.54L142.11 211.82Z"/><path d="M142.5 218.62L140.56 219.13L141.28 220.24Z"/><path d="M141.18 213.59L139.25 214.09L139.72 212.06Z"/><path d="M136.92 214.7L134.99 215.21L135.27 212.48Z"/><path d="M161.51 226.55L159.55 226.16L160.05 228.08Z"/><path d="M162.45 221.84L160.49 221.45L161.93 219.62Z"/><path d="M159.35 226.12L157.39 225.73L157.57 227.99Z"/><path d="M157.2 225.69L155.23 225.29L156.17 227.23Z"/><path d="M158.14 220.98L156.18 220.59L158.35 218.7Z"/><path d="M156.39 220.6L154.42 220.27L155.75 219.01Z"/><path d="M153.41 224.96L151.44 224.62L152.41 226.47Z"/><path d="M154.22 220.23L152.25 219.89L154.16 217.79Z"/><path d="M151.24 224.59L149.27 224.25L150.6 226.02Z"/><path d="M152.05 219.86L150.08 219.52L150.93 217.3Z"/><path d="M149.89 219.49L147.91 219.15L149.46 218.01Z"/><path d="M148.59 224.13L146.62 223.8L147.46 225.65Z"/><path d="M149.38 219.4L147.41 219.07L147.89 217.93Z"/><path d="M147.21 219.04L145.24 218.71L146.06 216.57Z"/><path d="M145.04 218.67L143.07 218.34L144.72 216.57Z"/><path d="M142.22 223.19L140.32 222.58L140.22 225.14Z"/><path d="M141.59 217.95L139.68 217.34L141.25 215.6Z"/><path d="M138.03 221.85L136.13 221.24L136.05 222.85Z"/><path d="M157.72 231.06L155.75 231.39L156.5 233.37Z"/><path d="M155.55 231.42L153.58 231.74L155.36 232.74Z"/><path d="M153.38 231.78L151.41 232.1L152.44 233.65Z"/><path d="M152.57 226.84L150.59 227.17L151.61 225.51Z"/><path d="M151.47 232.06L149.51 232.45L151.25 233.44Z"/><path d="M150.49 227.15L148.53 227.54L148.86 225.11Z"/><path d="M148.33 227.58L146.37 227.98L146.66 225.93Z"/><path d="M146.18 228.02L144.21 228.41L144.26 225.89Z"/><path d="M142.66 233.95L140.77 234.59L143.14 236.2Z"/><path d="M141.06 229.22L139.17 229.86L139.2 228.54Z"/><path d="M138.5 235.36L136.6 236L138.26 237.84Z"/><path d="M136.89 230.63L135 231.27L134.57 229.04Z"/><path d="M155.46 236.43L153.53 236.94L155.09 238.3Z"/><path d="M153.33 237L151.4 237.51L153.47 239.28Z"/><path d="M149.03 237.9L147.03 238.08L147.76 239.36Z"/><path d="M146.83 238.1L144.84 238.29L145.84 239.68Z"/><path d="M144.65 233.67L142.65 233.54L144.5 232.15Z"/><path d="M142.15 238.32L140.16 238.2L141.29 239.71Z"/><path d="M160.15 232.1L160.25 234.1L162.46 233.73Z"/><path d="M155.96 232.3L156.05 234.3L154.5 233.72Z"/><path d="M156.06 234.5L156.16 236.49L154.63 235.18Z"/><path d="M156.17 236.69L156.26 238.69L153.96 237.13Z"/><path d="M160.47 238.69L160.56 240.69L162.54 239.88Z"/><path d="M156.27 238.89L156.36 240.89L154.83 240.1Z"/><path d="M160.57 240.89L160.66 242.89L162.55 241.19Z"/><path d="M160.41 242.23L160.88 244.18L163.04 242.42Z"/><path d="M161.44 246.51L161.91 248.45L163.46 246.81Z"/><path d="M161.96 248.65L162.43 250.59L164.29 249.33Z"/><path d="M157.88 249.64L158.35 251.58L155.54 250.64Z"/><path d="M158.4 251.78L158.87 253.72L156.92 252.63Z"/><path d="M158.68 253.5L159.46 255.34L157.55 254.87Z"/><path d="M163.4 253.88L164.19 255.72L165.39 253.68Z"/><path d="M159.54 255.53L160.32 257.37L158.34 256.96Z"/><path d="M160.4 257.55L161.18 259.39L159.32 258.43Z"/><path d="M162.12 261.6L162.9 263.44L160.7 262.76Z"/><path d="M162.69 262.73L163.34 264.62L161.01 265.02Z"/><path d="M167.37 263.46L168.02 265.35L169.61 263.89Z"/><path d="M168.08 265.54L168.73 267.43L170.67 265.69Z"/><path d="M168.79 267.62L169.44 269.52L170.93 267.89Z"/><path d="M169.5 269.71L170.15 271.6L171.95 270.7Z"/><path d="M165.53 271.06L166.17 272.95L163.73 272.94Z"/><path d="M169.68 270.19L170.31 272.08L172.06 271.17Z"/><path d="M165.69 271.52L166.32 273.41L163.78 273.38Z"/><path d="M166.39 273.6L167.02 275.5L164.71 275.94Z"/><path d="M171.07 274.36L171.7 276.26L173.52 274.57Z"/><path d="M167.08 275.69L167.72 277.59L166.05 277.08Z"/><path d="M164.41 230.02L165.76 231.49L163.31 232.17Z"/><path d="M169.73 228.13L171.08 229.6L171.7 227.74Z"/><path d="M165.89 231.64L167.25 233.12L165.37 232.85Z"/><path d="M171.21 229.75L172.57 231.22L172.92 228.88Z"/><path d="M167.38 233.26L168.73 234.74L166.72 234.38Z"/><path d="M172.7 231.37L174.05 232.85L174.62 230.76Z"/><path d="M168.87 234.88L170.22 236.36L168.13 236.69Z"/><path d="M174.62 233.19L175.28 235.08L176.53 233.01Z"/><path d="M169.72 234.92L170.38 236.81L168.51 235.65Z"/><path d="M175.35 235.27L176.02 237.15L177.84 235.39Z"/><path d="M170.45 237L171.11 238.88L169.19 238.1Z"/><path d="M176.82 239.42L177.48 241.3L178.1 239.33Z"/><path d="M177.55 241.49L178.21 243.38L180.29 241.54Z"/><path d="M178.04 242.35L178.15 244.35L179.73 243.42Z"/><path d="M172.85 242.65L172.96 244.65L171.33 244.31Z"/><path d="M172.97 244.85L173.09 246.85L170.82 246.35Z"/><path d="M173.1 247.05L173.22 249.04L171.36 247.72Z"/><path d="M178.42 248.94L178.54 250.93L180.03 249.32Z"/><path d="M178.74 251.48L178.38 253.44L180.51 252.25Z"/><path d="M173.62 250.56L173.26 252.52L171.54 251.62Z"/><path d="M178.35 253.64L177.99 255.61L179.58 255.44Z"/><path d="M177.96 255.81L177.6 257.78L180.13 257.59Z"/><path d="M172.84 254.89L172.48 256.85L170.28 254.8Z"/><path d="M177.57 257.97L177.21 259.94L178.64 259.42Z"/><path d="M177.18 260.14L176.82 262.11L178.37 262.13Z"/><path d="M171.97 260.33L171.43 262.25L170.49 260.25Z"/><path d="M176.37 263.87L175.83 265.79L177.08 265.88Z"/><path d="M171.37 262.44L170.82 264.37L169.5 263.5Z"/><path d="M175.17 268.1L174.62 270.02L177.13 269.85Z"/><path d="M170.17 266.68L169.62 268.6L168.03 267.05Z"/><path d="M174.57 270.21L174.02 272.14L175.92 271.61Z"/><path d="M169.57 268.79L169.02 270.72L167.22 269.34Z"/><path d="M162.15 215.92L164.02 215.21L161.82 214.12Z"/><path d="M166.26 214.37L168.13 213.66L166.91 211.42Z"/><path d="M168.1 219.23L169.97 218.52L169.7 221.07Z"/><path d="M170.16 218.45L172.03 217.75L171.57 220.28Z"/><path d="M172.22 217.68L174.09 216.97L174.11 218.76Z"/><path d="M171.62 212.18L173.59 211.88L172.08 210.75Z"/><path d="M175.97 211.51L177.94 211.21L176.73 209.44Z"/><path d="M176.75 216.65L178.73 216.35L178.6 218.84Z"/><path d="M178.14 211.18L180.12 210.88L178.97 209.65Z"/><path d="M178.93 216.32L180.91 216.02L179.64 217.5Z"/><path d="M180.32 210.85L182.29 210.54L181.37 208.09Z"/><path d="M181.1 215.99L183.08 215.68L181.54 217.4Z"/><path d="M184.67 210.18L186.64 209.88L185.62 207.93Z"/><path d="M188.99 209.61L190.98 209.45L189.1 208.16Z"/><path d="M191.18 209.43L193.17 209.27L192.69 207.17Z"/><path d="M193.37 209.26L195.37 209.09L194.98 206.96Z"/><path d="M193.79 214.44L195.79 214.28L194.85 216.05Z"/><path d="M195.56 209.08L197.56 208.92L195.81 206.51Z"/><path d="M198.18 214.08L200.17 213.92L199.42 215.99Z"/><path d="M199.95 208.72L201.94 208.56L201.43 206.4Z"/><path d="M202.56 213.73L204.56 213.57L203.25 216.17Z"/><path d="M204.34 208.37L206.33 208.21L205.84 205.71Z"/><path d="M204.76 213.55L206.75 213.39L206.64 214.95Z"/><path d="M174.32 222.1L176.32 221.92L175.53 220.04Z"/><path d="M176.52 221.9L178.51 221.72L178.1 220.16Z"/><path d="M176.87 225.88L178.87 225.7L177.33 227.82Z"/><path d="M180.9 221.51L182.89 221.33L182.28 219.91Z"/><path d="M181.26 225.49L183.25 225.31L182.54 227.93Z"/><path d="M183.45 225.29L185.44 225.11L185.26 226.83Z"/><path d="M185.64 225.09L187.63 224.92L187.51 226.63Z"/><path d="M189.33 220.15L191.25 219.61L190.4 217.74Z"/><path d="M190.42 224L192.34 223.46L192.59 226.03Z"/><path d="M191.45 219.55L193.37 219.01L191.57 216.85Z"/><path d="M192.53 223.4L194.46 222.86L194.4 224.14Z"/><path d="M195.68 218.36L197.6 217.81L196.02 216.23Z"/><path d="M200.22 221.47L201.75 220.19L202.5 222.05Z"/><path d="M201.91 220.06L203.44 218.77L204.38 220.52Z"/><path d="M203.59 218.64L205.12 217.35L206.23 219.54Z"/><path d="M166.13 225.94L167.99 226.67L167.66 224.8Z"/><path d="M168.18 226.74L170.04 227.47L169.47 225.63Z"/><path d="M166.06 232.14L167.92 232.87L166.24 233.62Z"/><path d="M170.15 233.75L172.01 234.48L169.73 235.9Z"/><path d="M174.32 229.15L176.18 229.88L176.51 228.01Z"/><path d="M176.37 229.96L178.23 230.69L177.69 227.94Z"/><path d="M174.25 235.36L176.11 236.09L174.66 237.75Z"/><path d="M179.88 231.43L181.79 232.01L182.04 229.52Z"/><path d="M182.42 238.25L184.34 238.83L182.89 241.08Z"/><path d="M186.2 233.33L188.11 233.91L188.23 232.25Z"/><path d="M184.53 238.89L186.45 239.46L185.46 241.54Z"/><path d="M186.64 239.52L188.55 240.09L187.74 241.39Z"/><path d="M190.41 234.6L192.33 235.17L191.92 232.46Z"/><path d="M188.74 240.15L190.66 240.73L189.74 242.26Z"/><path d="M190.93 234.73L192.84 235.34L192.25 233.31Z"/><path d="M193.03 235.4L194.93 236.01L194.2 233.69Z"/><path d="M191.26 240.93L193.16 241.54L191.73 243.32Z"/><path d="M199.31 237.42L201.22 238.02L201.72 235.72Z"/><path d="M197.55 242.94L199.45 243.55L197.58 245.26Z"/></g></g><g fill="rgba(70,55,20,0.55)" stroke="rgb(246,196,60)" stroke-width="0.75"><circle cx="161.35" cy="221.41" r="1.15"/><circle cx="160.95" cy="219.36" r="1.15"/><circle cx="162.91" cy="218.62" r="1.15"/><circle cx="158.64" cy="219.9" r="1.15"/><circle cx="158.24" cy="217.85" r="1.15"/><circle cx="160.2" cy="217.11" r="1.15"/><circle cx="155.93" cy="218.39" r="1.15"/><circle cx="155.53" cy="216.34" r="1.15"/><circle cx="157.49" cy="215.6" r="1.15"/><circle cx="153.48" cy="217.8" r="1.15"/><circle cx="152.41" cy="216" r="1.15"/><circle cx="154.01" cy="214.65" r="1.15"/><circle cx="150.42" cy="217.29" r="1.15"/><circle cx="149.35" cy="215.49" r="1.15"/><circle cx="150.95" cy="214.14" r="1.15"/><circle cx="147.64" cy="217.27" r="1.15"/><circle cx="146.25" cy="215.71" r="1.15"/><circle cx="147.55" cy="214.07" r="1.15"/><circle cx="144.54" cy="217.36" r="1.15"/><circle cx="143.15" cy="215.8" r="1.15"/><circle cx="144.45" cy="214.16" r="1.15"/><circle cx="141.86" cy="217.75" r="1.15"/><circle cx="140.14" cy="216.55" r="1.15"/><circle cx="141.05" cy="214.66" r="1.15"/><circle cx="138.86" cy="218.54" r="1.15"/><circle cx="137.15" cy="217.33" r="1.15"/><circle cx="138.05" cy="215.44" r="1.15"/><circle cx="159.74" cy="225.18" r="1.15"/><circle cx="158.97" cy="222.17" r="1.15"/><circle cx="156.71" cy="224.57" r="1.15"/><circle cx="155.93" cy="221.56" r="1.15"/><circle cx="153.7" cy="224" r="1.15"/><circle cx="152.84" cy="221.01" r="1.15"/><circle cx="150.64" cy="223.47" r="1.15"/><circle cx="149.78" cy="220.49" r="1.15"/><circle cx="147.59" cy="222.95" r="1.15"/><circle cx="146.72" cy="219.97" r="1.15"/><circle cx="144.54" cy="222.44" r="1.15"/><circle cx="143.66" cy="219.46" r="1.15"/><circle cx="141.29" cy="221.84" r="1.15"/><circle cx="140.86" cy="218.76" r="1.15"/><circle cx="138.34" cy="220.9" r="1.15"/><circle cx="137.91" cy="217.82" r="1.15"/><circle cx="157.76" cy="230.04" r="1.15"/><circle cx="155.94" cy="227.3" r="1.15"/><circle cx="154.7" cy="230.55" r="1.15"/><circle cx="152.88" cy="227.81" r="1.15"/><circle cx="151.64" cy="231.05" r="1.15"/><circle cx="149.82" cy="228.31" r="1.15"/><circle cx="148.64" cy="231.6" r="1.15"/><circle cx="146.73" cy="228.92" r="1.15"/><circle cx="145.6" cy="232.21" r="1.15"/><circle cx="143.69" cy="229.53" r="1.15"/><circle cx="142.77" cy="232.86" r="1.15"/><circle cx="140.53" cy="230.45" r="1.15"/><circle cx="139.84" cy="233.85" r="1.15"/><circle cx="137.6" cy="231.45" r="1.15"/><circle cx="155.39" cy="235.41" r="1.15"/><circle cx="153.37" cy="233.05" r="1.15"/><circle cx="152.4" cy="236.21" r="1.15"/><circle cx="150.37" cy="233.85" r="1.15"/><circle cx="149.14" cy="236.89" r="1.15"/><circle cx="147.54" cy="234.22" r="1.15"/><circle cx="146.06" cy="237.17" r="1.15"/><circle cx="144.45" cy="234.51" r="1.15"/><circle cx="142.75" cy="237.36" r="1.15"/><circle cx="141.58" cy="234.48" r="1.15"/><circle cx="139.66" cy="237.17" r="1.15"/><circle cx="138.48" cy="234.29" r="1.15"/><circle cx="159.15" cy="231.95" r="1.15"/><circle cx="157.01" cy="233.4" r="1.15"/><circle cx="159.29" cy="235.04" r="1.15"/><circle cx="157.16" cy="236.5" r="1.15"/><circle cx="159.44" cy="238.14" r="1.15"/><circle cx="157.3" cy="239.59" r="1.15"/><circle cx="159.58" cy="241.24" r="1.15"/><circle cx="157.45" cy="242.69" r="1.15"/><circle cx="159.83" cy="244.11" r="1.15"/><circle cx="158.01" cy="245.94" r="1.15"/><circle cx="160.56" cy="247.12" r="1.15"/><circle cx="158.74" cy="248.95" r="1.15"/><circle cx="161.29" cy="250.13" r="1.15"/><circle cx="159.47" cy="251.96" r="1.15"/><circle cx="162.02" cy="253.15" r="1.15"/><circle cx="160.2" cy="254.98" r="1.15"/><circle cx="163.15" cy="255.84" r="1.15"/><circle cx="161.65" cy="257.94" r="1.15"/><circle cx="164.36" cy="258.69" r="1.15"/><circle cx="162.87" cy="260.79" r="1.15"/><circle cx="165.57" cy="261.54" r="1.15"/><circle cx="164.08" cy="263.65" r="1.15"/><circle cx="166.68" cy="264.52" r="1.15"/><circle cx="165.03" cy="266.51" r="1.15"/><circle cx="167.68" cy="267.46" r="1.15"/><circle cx="166.03" cy="269.44" r="1.15"/><circle cx="168.68" cy="270.39" r="1.15"/><circle cx="167.04" cy="272.38" r="1.15"/><circle cx="169.67" cy="273.34" r="1.15"/><circle cx="168.01" cy="275.31" r="1.15"/><circle cx="168.86" cy="228.66" r="1.15"/><circle cx="168.59" cy="230.73" r="1.15"/><circle cx="166.5" cy="230.82" r="1.15"/><circle cx="170.95" cy="230.94" r="1.15"/><circle cx="170.68" cy="233.02" r="1.15"/><circle cx="168.59" cy="233.1" r="1.15"/><circle cx="173.04" cy="233.23" r="1.15"/><circle cx="172.78" cy="235.3" r="1.15"/><circle cx="170.69" cy="235.39" r="1.15"/><circle cx="174.73" cy="236.5" r="1.15"/><circle cx="173.67" cy="238.31" r="1.15"/><circle cx="171.71" cy="237.57" r="1.15"/><circle cx="175.76" cy="239.43" r="1.15"/><circle cx="174.7" cy="241.23" r="1.15"/><circle cx="172.74" cy="240.49" r="1.15"/><circle cx="176.79" cy="242.35" r="1.15"/><circle cx="175.73" cy="244.16" r="1.15"/><circle cx="173.77" cy="243.42" r="1.15"/><circle cx="177.24" cy="245.85" r="1.15"/><circle cx="175.72" cy="247.29" r="1.15"/><circle cx="174.05" cy="246.04" r="1.15"/><circle cx="177.42" cy="248.94" r="1.15"/><circle cx="175.9" cy="250.38" r="1.15"/><circle cx="174.23" cy="249.13" r="1.15"/><circle cx="177.55" cy="252.41" r="1.15"/><circle cx="175.74" cy="253.46" r="1.15"/><circle cx="174.4" cy="251.85" r="1.15"/><circle cx="177" cy="255.46" r="1.15"/><circle cx="175.19" cy="256.51" r="1.15"/><circle cx="173.85" cy="254.9" r="1.15"/><circle cx="176.45" cy="258.52" r="1.15"/><circle cx="174.64" cy="259.56" r="1.15"/><circle cx="173.3" cy="257.95" r="1.15"/><circle cx="175.9" cy="261.57" r="1.15"/><circle cx="174.09" cy="262.61" r="1.15"/><circle cx="172.75" cy="261" r="1.15"/><circle cx="175.09" cy="264.72" r="1.15"/><circle cx="173.18" cy="265.58" r="1.15"/><circle cx="172.01" cy="263.84" r="1.15"/><circle cx="174.24" cy="267.7" r="1.15"/><circle cx="172.34" cy="268.56" r="1.15"/><circle cx="171.17" cy="266.83" r="1.15"/><circle cx="173.4" cy="270.68" r="1.15"/><circle cx="171.49" cy="271.54" r="1.15"/><circle cx="170.32" cy="269.81" r="1.15"/><circle cx="164.37" cy="216.15" r="1.15"/><circle cx="166.2" cy="217.17" r="1.15"/><circle cx="165.5" cy="219.14" r="1.15"/><circle cx="167.27" cy="215.05" r="1.15"/><circle cx="169.1" cy="216.07" r="1.15"/><circle cx="168.4" cy="218.05" r="1.15"/><circle cx="170.17" cy="213.96" r="1.15"/><circle cx="172" cy="214.98" r="1.15"/><circle cx="171.3" cy="216.95" r="1.15"/><circle cx="173.43" cy="212.92" r="1.15"/><circle cx="175.01" cy="214.29" r="1.15"/><circle cx="173.91" cy="216.08" r="1.15"/><circle cx="176.49" cy="212.45" r="1.15"/><circle cx="178.07" cy="213.82" r="1.15"/><circle cx="176.98" cy="215.61" r="1.15"/><circle cx="179.56" cy="211.98" r="1.15"/><circle cx="181.13" cy="213.35" r="1.15"/><circle cx="180.04" cy="215.14" r="1.15"/><circle cx="182.62" cy="211.51" r="1.15"/><circle cx="184.2" cy="212.88" r="1.15"/><circle cx="183.11" cy="214.67" r="1.15"/><circle cx="185.69" cy="211.04" r="1.15"/><circle cx="187.26" cy="212.41" r="1.15"/><circle cx="186.17" cy="214.2" r="1.15"/><circle cx="188.87" cy="210.62" r="1.15"/><circle cx="190.35" cy="212.11" r="1.15"/><circle cx="189.13" cy="213.81" r="1.15"/><circle cx="191.96" cy="210.37" r="1.15"/><circle cx="193.44" cy="211.86" r="1.15"/><circle cx="192.22" cy="213.56" r="1.15"/><circle cx="195.05" cy="210.12" r="1.15"/><circle cx="196.53" cy="211.61" r="1.15"/><circle cx="195.31" cy="213.31" r="1.15"/><circle cx="198.14" cy="209.87" r="1.15"/><circle cx="199.62" cy="211.36" r="1.15"/><circle cx="198.4" cy="213.06" r="1.15"/><circle cx="201.23" cy="209.62" r="1.15"/><circle cx="202.71" cy="211.11" r="1.15"/><circle cx="201.49" cy="212.81" r="1.15"/><circle cx="204.32" cy="209.37" r="1.15"/><circle cx="205.8" cy="210.86" r="1.15"/><circle cx="204.58" cy="212.56" r="1.15"/><circle cx="176.41" cy="222.91" r="1.15"/><circle cx="177.93" cy="224.79" r="1.15"/><circle cx="179.49" cy="222.64" r="1.15"/><circle cx="181.02" cy="224.51" r="1.15"/><circle cx="182.58" cy="222.36" r="1.15"/><circle cx="184.11" cy="224.23" r="1.15"/><circle cx="185.67" cy="222.08" r="1.15"/><circle cx="187.19" cy="223.95" r="1.15"/><circle cx="188.5" cy="221.42" r="1.15"/><circle cx="190.34" cy="222.98" r="1.15"/><circle cx="191.48" cy="220.58" r="1.15"/><circle cx="193.32" cy="222.14" r="1.15"/><circle cx="194.46" cy="219.74" r="1.15"/><circle cx="196.31" cy="221.3" r="1.15"/><circle cx="197.45" cy="218.9" r="1.15"/><circle cx="199.29" cy="220.45" r="1.15"/><circle cx="199.85" cy="217.86" r="1.15"/><circle cx="202.17" cy="218.52" r="1.15"/><circle cx="202.23" cy="215.87" r="1.15"/><circle cx="204.55" cy="216.53" r="1.15"/><circle cx="204.6" cy="213.87" r="1.15"/><circle cx="206.92" cy="214.53" r="1.15"/><circle cx="167.63" cy="227.6" r="1.15"/><circle cx="168.19" cy="229.86" r="1.15"/><circle cx="166.24" cy="231.13" r="1.15"/><circle cx="170.51" cy="228.73" r="1.15"/><circle cx="171.07" cy="230.99" r="1.15"/><circle cx="169.12" cy="232.27" r="1.15"/><circle cx="173.4" cy="229.86" r="1.15"/><circle cx="173.96" cy="232.13" r="1.15"/><circle cx="172.01" cy="233.4" r="1.15"/><circle cx="176.28" cy="231" r="1.15"/><circle cx="176.84" cy="233.26" r="1.15"/><circle cx="174.89" cy="234.53" r="1.15"/><circle cx="179.17" cy="232.13" r="1.15"/><circle cx="179.73" cy="234.39" r="1.15"/><circle cx="177.78" cy="235.67" r="1.15"/><circle cx="181.94" cy="233.1" r="1.15"/><circle cx="182.69" cy="235.31" r="1.15"/><circle cx="180.85" cy="236.74" r="1.15"/><circle cx="184.91" cy="233.99" r="1.15"/><circle cx="185.66" cy="236.2" r="1.15"/><circle cx="183.82" cy="237.63" r="1.15"/><circle cx="187.88" cy="234.88" r="1.15"/><circle cx="188.63" cy="237.09" r="1.15"/><circle cx="186.79" cy="238.52" r="1.15"/><circle cx="190.85" cy="235.77" r="1.15"/><circle cx="191.6" cy="237.98" r="1.15"/><circle cx="189.76" cy="239.41" r="1.15"/><circle cx="193.84" cy="236.71" r="1.15"/><circle cx="194.55" cy="238.94" r="1.15"/><circle cx="192.68" cy="240.33" r="1.15"/><circle cx="196.79" cy="237.66" r="1.15"/><circle cx="197.5" cy="239.88" r="1.15"/><circle cx="195.63" cy="241.28" r="1.15"/><circle cx="199.75" cy="238.6" r="1.15"/><circle cx="200.45" cy="240.82" r="1.15"/><circle cx="198.59" cy="242.22" r="1.15"/></g><circle cx="161.6" cy="221.8" r="1.1" fill="#222"/><circle cx="162.6" cy="224.9" r="1.1" fill="#222"/></svg><div class="t b" style="left:324.7px;top:59.90px;">Settings:</div><div class="t b" style="left:324.7px;top:74.60px;">Type Agent to focus on</div><div class="inp" style="left:407.6px;top:69.8px;width:55.2px;height:14px"></div><div class="btn" style="left:465.3px;top:70.4px;width:26.5px;height:13.2px">Apply</div><div class="btn" style="left:494.1px;top:70.4px;width:27.6px;height:13.2px">Reset</div><div class="t b" style="left:324.2px;top:92.90px;">Monitoring</div><div class="t b" style="left:324.2px;top:112.60px;">Channel:</div><div class="inp" style="left:356.4px;top:110.4px;width:45.2px;height:11.4px;color:#333">Channel 1<span style="position:absolute;left:37px;top:3px;font-size:4.6px">&#9660;</span></div><div class="btn" style="left:404.4px;top:109.6px;width:26.6px;height:12.8px">Apply</div><div class="t b" style="left:324.2px;top:133.00px;">Component:</div><div class="inp" style="left:368px;top:130.4px;width:17px;height:10.8px;color:#333">Z<span style="position:absolute;left:8.6px;top:3px;font-size:4.6px">&#9660;</span></div><div class="btn" style="left:388.6px;top:129.4px;width:26px;height:13px">Apply</div><div style="position:absolute;left:14px;top:374px;width:586px;height:1px;background:#eaeaea"></div><div class="t" style="left:14.5px;top:389.60px;color:#555">Super agent sensor data - <span style="color:#4679ad">Click here for training</span></div><div class="btn" style="left:173.7px;top:386px;width:28px;height:13.3px;color:#31708f">Reset</div><div class="t b blue" style="left:204px;top:389.60px;">Class index:</div><div class="inp" style="left:249px;top:385.6px;width:37px;height:14px">0</div><div class="btn" style="left:288px;top:386px;width:24.4px;height:13.6px;color:#31708f">Start</div><div class="btn" style="left:314.4px;top:385.6px;width:29.2px;height:14px;color:#31708f">Pause</div><div class="t b blue" style="left:347px;top:389.60px;">Training set:</div><div class="inp" style="left:391.6px;top:385.6px;width:73.5px;height:14px"></div><div class="btn" style="left:467.7px;top:385.5px;width:65.1px;height:14px;color:#31708f">Post Training Set</div><div class="t b blue" style="left:535.1px;top:389.60px;">Cmd:</div><div class="inp" style="left:555.7px;top:385px;width:36.8px;height:14.5px">100</div><div class="t b blue" style="left:14px;top:404.60px;">Comp1:</div><div class="inp" style="left:44px;top:400px;width:36.4px;height:14.4px">10</div><div class="t b blue" style="left:80.4px;top:404.60px;">Comp2:</div><div class="inp" style="left:110px;top:400px;width:36.7px;height:14.4px">20</div><div class="t b blue" style="left:147.3px;top:404.60px;">Comp3:</div><div class="inp" style="left:176.4px;top:400px;width:36.6px;height:14.4px">30</div><div class="btn" style="left:214.4px;top:400px;width:21.2px;height:14px;color:#31708f">Job</div><div style="position:absolute;left:14px;top:420px;width:549.5px;height:70px;border:1px solid #a9a9a9;box-shadow:inset 0 1px 1px rgba(0,0,0,.075);background:#fff;overflow:hidden"><div class="t" style="left:0.6px;top:3.6px;font-size:7.44px;color:#5580ac">Ag1537543893</div><div class="t" style="left:0.6px;top:13.9px;font-size:7.44px;color:#5580ac">0,0.002,0.003,0.002,0.002,0.002,0.002,0.002,0.003,0.003,0.003,0.002,0.003,0.004,0.003,0.002,0.002,0.003,0.003,0.004,0.003,0.003,0.003,0.003,0.003,0.003,0.00</div><div class="t" style="left:0.6px;top:24.200000000000003px;font-size:7.44px;color:#5580ac">3,0.002,0.003,0.003,0.003,0.003,0.003,0.003,0.003,0.003,0.003,0.002,0.002,0.003,0.003,0.003,0.003,0.002,0.003,0.003,0.003,0.003,0.003,0.003,0.003,0.003,0.00</div><div class="t" style="left:0.6px;top:34.5px;font-size:7.44px;color:#5580ac">3,0.003,0.003,0.002,0.002,0.003,0.003,0.003,0.003,0.003,0.003,0.003,0.003,0.002,0.003,0.003,0.003,0.002,0.002,0.002,0.003,0.004,0.014,0.037,0.031,0.033,0.01</div><div class="t" style="left:0.6px;top:44.800000000000004px;font-size:7.44px;color:#5580ac">,0.003,0.003,0.003,0.002,0.002,0.003,0.003,0.003,0.003,0.003,0.002,0.002,0.003,0.002,0.002,0.003,0.002,0.002,0.003,0.003,0.003,0.003,0.003,0.003,0.003,0.003</div><div class="t" style="left:0.6px;top:55.1px;font-size:7.44px;color:#5580ac">,0.003,0.003,0.003,0.003,0.003,0.003,0.003,0.003,0.002,0.003,0.003,0.003,0.003,0.003,0.002,0.002,0.003,0.003,0.003,0.002,0.002,0.003,0.003,0.003,0.002,0.003</div><div style="position:absolute;left:538.6px;top:0;width:9px;height:70px;background:#f1f1f1"></div><div style="position:absolute;left:539.8px;top:9.6px;width:6.6px;height:32px;background:#c1c1c1"></div><div style="position:absolute;left:540.6px;top:3px;width:0;height:0;border-left:2.5px solid transparent;border-right:2.5px solid transparent;border-bottom:2.5px solid #a3a3a3"></div></div></div></body></html>
